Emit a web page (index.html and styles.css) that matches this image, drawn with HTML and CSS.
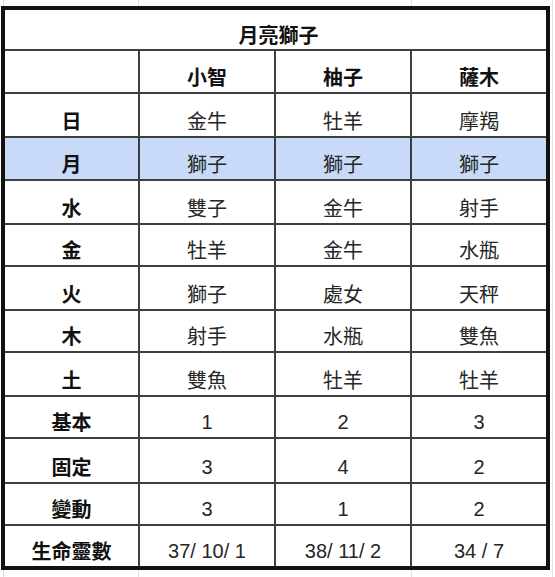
FILE: index.html
```html
<!DOCTYPE html>
<html lang="zh-Hant">
<head>
<meta charset="utf-8">
<title>月亮獅子</title>
<link rel="stylesheet" href="styles.css">
</head>
<body>
<div class="sheet">
  <div class="cell title">月亮獅子</div>

  <div class="cell"></div>
  <div class="cell head">小智</div>
  <div class="cell head">柚子</div>
  <div class="cell head end">薩木</div>

  <div class="cell label">日</div>
  <div class="cell val">金牛</div>
  <div class="cell val">牡羊</div>
  <div class="cell val end">摩羯</div>

  <div class="cell label hl">月</div>
  <div class="cell val hl">獅子</div>
  <div class="cell val hl">獅子</div>
  <div class="cell val hl end">獅子</div>

  <div class="cell label">水</div>
  <div class="cell val">雙子</div>
  <div class="cell val">金牛</div>
  <div class="cell val end">射手</div>

  <div class="cell label">金</div>
  <div class="cell val">牡羊</div>
  <div class="cell val">金牛</div>
  <div class="cell val end">水瓶</div>

  <div class="cell label">火</div>
  <div class="cell val">獅子</div>
  <div class="cell val">處女</div>
  <div class="cell val end">天秤</div>

  <div class="cell label">木</div>
  <div class="cell val">射手</div>
  <div class="cell val">水瓶</div>
  <div class="cell val end">雙魚</div>

  <div class="cell label">土</div>
  <div class="cell val">雙魚</div>
  <div class="cell val">牡羊</div>
  <div class="cell val end">牡羊</div>

  <div class="cell label">基本</div>
  <div class="cell val num">1</div>
  <div class="cell val num">2</div>
  <div class="cell val num end">3</div>

  <div class="cell label">固定</div>
  <div class="cell val num">3</div>
  <div class="cell val num">4</div>
  <div class="cell val num end">2</div>

  <div class="cell label">變動</div>
  <div class="cell val num">3</div>
  <div class="cell val num">1</div>
  <div class="cell val num end">2</div>

  <div class="cell label last">生命靈數</div>
  <div class="cell val num last">37/ 10/ 1</div>
  <div class="cell val num last">38/ 11/ 2</div>
  <div class="cell val num last end">34 / 7</div>
</div>
</body>
</html>
```

FILE: styles.css
```css
html, body {
  margin: 0;
  padding: 0;
}

body {
  width: 555px;
  height: 577px;
  overflow: hidden;
  background-color: #fff;
  background-image:
    linear-gradient(to right, transparent 3px, #e2e2e2 3px, #e2e2e2 4px, transparent 4px),
    linear-gradient(to right, transparent 138px, #e2e2e2 138px, #e2e2e2 139px, transparent 139px),
    linear-gradient(to right, transparent 411px, #e2e2e2 411px, #e2e2e2 412px, transparent 412px),
    linear-gradient(to right, transparent 552px, #e2e2e2 552px, #e2e2e2 553px, transparent 553px);
  font-family: "Noto Sans CJK TC", "Noto Sans CJK SC", sans-serif;
}

.sheet {
  margin: 6px 0 0 1px;
  width: 549px;
  box-sizing: border-box;
  border: 4px solid #111;
  background: #fff;
  display: grid;
  grid-template-columns: 135px 136px 136px 134px;
  grid-template-rows: 41px 43px 44px 43px 44px 42px 44px 42px 44px 42px 45px 42px 40px;
}

.cell {
  box-sizing: border-box;
  border-right: 2px solid #3f3f3f;
  border-bottom: 2px solid #3f3f3f;
  display: flex;
  align-items: flex-end;
  justify-content: center;
  padding-bottom: 3px;
  font-size: 20px;
  line-height: 24px;
  color: #111;
  white-space: nowrap;
}

.title {
  grid-column: 1 / 5;
  border-right: none;
  font-weight: 700;
  padding-left: 6px;
  padding-bottom: 2px;
}

.head,
.label {
  font-weight: 700;
  color: #111;
}

.val {
  font-weight: 400;
  color: #262626;
}

.num {
  font-family: "Liberation Sans", "Noto Sans CJK TC", sans-serif;
  font-size: 20px;
  padding-bottom: 3px;
}

.hl {
  background: #c9daf8;
}

.end {
  border-right: none;
}

.last {
  border-bottom: none;
}
```
